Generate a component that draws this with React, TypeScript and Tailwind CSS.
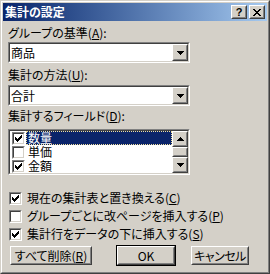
import React from "react";

const font = "font-['Noto_Sans_CJK_JP','Noto_Sans',sans-serif] [font-feature-settings:'palt']";

function Raised({ className = "", children }: { className?: string; children?: React.ReactNode }) {
  return (
    <div className={`border border-t-white border-l-white border-r-[#404040] border-b-[#404040] bg-[#d4d0c8] ${className}`}>
      <div className="w-full h-full border border-t-[#d4d0c8] border-l-[#d4d0c8] border-r-[#808080] border-b-[#808080] flex items-center justify-center whitespace-nowrap">
        {children}
      </div>
    </div>
  );
}

function Sunken({ className = "", children }: { className?: string; children?: React.ReactNode }) {
  return (
    <div className={`border border-t-[#808080] border-l-[#808080] border-r-white border-b-white ${className}`}>
      <div className="w-full h-full border border-t-[#404040] border-l-[#404040] border-r-[#d4d0c8] border-b-[#d4d0c8] bg-white flex overflow-hidden">
        {children}
      </div>
    </div>
  );
}

function Arrow({ up = false }: { up?: boolean }) {
  return (
    <svg width="7" height="4" viewBox="0 0 7 4" shapeRendering="crispEdges">
      <path d={up ? "M3 0h1v1h1v1h1v1h1v1H0V3h1V2h1V1h1z" : "M0 0h7v1H6v1H5v1H4v1H3V3H2V2H1V1H0z"} fill="#000" />
    </svg>
  );
}

function Check() {
  return (
    <svg width="7" height="7" viewBox="0 0 7 7" shapeRendering="crispEdges">
      <path d="M0 2h1v3H0zM1 3h1v3H1zM2 4h1v3H2zM3 3h1v3H3zM4 2h1v3H4zM5 1h1v3H5zM6 0h1v3H6z" fill="#000" />
    </svg>
  );
}

function CheckBox({ checked }: { checked: boolean }) {
  return (
    <Sunken className="w-[13px] h-[13px] shrink-0">
      <div className="w-full h-full flex items-center justify-center">{checked && <Check />}</div>
    </Sunken>
  );
}

function Combo({ value }: { value: string }) {
  return (
    <Sunken className="w-[182px] h-[21px]">
      <div className="flex-1 pl-[1px] flex items-center leading-none">{value}</div>
      <Raised className="w-[16px] h-full">
        <Arrow />
      </Raised>
    </Sunken>
  );
}

function Option({ checked, label, mark }: { checked: boolean; label: string; mark: string }) {
  return (
    <div className="h-[18px] flex items-center pl-[1px] gap-[5px] whitespace-nowrap">
      <CheckBox checked={checked} />
      <span>
        {label}(<u>{mark}</u>)
      </span>
    </div>
  );
}

const fields = [
  { name: "数量", checked: true, selected: true },
  { name: "単価", checked: false, selected: false },
  { name: "金額", checked: true, selected: false },
];

export default function App() {
  return (
    <div className={`w-[270px] h-[274px] bg-[#d4d0c8] text-black text-[12px] ${font}`}>
      <div className="w-full h-full border border-t-[#d4d0c8] border-l-[#d4d0c8] border-r-[#404040] border-b-[#404040]">
        <div className="w-full h-full border border-t-white border-l-white border-r-[#808080] border-b-[#808080] p-px flex flex-col">
          {/* title bar */}
          <div className="h-[18px] shrink-0 flex items-center pl-[2px] pr-[2px] bg-gradient-to-r from-[#0a246a] to-[#a6caf0]">
            <span className="text-white font-bold leading-none flex-1">集計の設定</span>
            <div className="flex gap-[2px]">
              <Raised className="w-[16px] h-[14px]">
                <span className="font-['Liberation_Sans',sans-serif] font-bold text-[11px] leading-none">?</span>
              </Raised>
              <Raised className="w-[16px] h-[14px]">
                <svg width="8" height="7" viewBox="0 0 8 7" shapeRendering="crispEdges">
                  <path d="M0 0h2v1h1v1h2V1h1V0h2v1H7v1H6v1H5v1h1v1h1v1h1v1H6V6H5V5H3v1H2v1H0V6h1V5h1V4h1V3H2V2H1V1H0z" fill="#000" />
                </svg>
              </Raised>
            </div>
          </div>

          {/* content */}
          <div className="flex flex-col pl-[5px] mt-px">
            <div className="mt-[4px] h-[14px] leading-[14px]">
              グループの基準(<u>A</u>):
            </div>
            <div className="mt-[2px]">
              <Combo value="商品" />
            </div>
            <div className="mt-[5px] h-[14px] leading-[14px]">
              集計の方法(<u>U</u>):
            </div>
            <div className="mt-[3px]">
              <Combo value="合計" />
            </div>
            <div className="mt-[3px] h-[14px] leading-[14px]">
              集計するフィールド(<u>D</u>):
            </div>

            {/* field list */}
            <Sunken className="mt-[6px] w-[182px] h-[46px]">
              <div className="flex-1 flex flex-col">
                {fields.map((f) => (
                  <div key={f.name} className="h-[14px] shrink-0 flex items-center pl-[2px]">
                    <CheckBox checked={f.checked} />
                    <div
                      className={`ml-px flex-1 h-full flex items-center pl-[2px] leading-none ${
                        f.selected ? "bg-[#0a246a] text-white outline-1 outline-dotted outline-offset-[-1px] outline-[#f0e0a0]" : ""
                      }`}
                    >
                      {f.name}
                    </div>
                  </div>
                ))}
              </div>
              <div className="w-[16px] flex flex-col bg-[#e8e6e2]">
                <Raised className="h-[16px] shrink-0">
                  <Arrow up />
                </Raised>
                <Raised className="flex-1" />
                <Raised className="h-[16px] shrink-0">
                  <Arrow />
                </Raised>
              </div>
            </Sunken>

            {/* options */}
            <div className="mt-[14px] flex flex-col">
              <Option checked label="現在の集計表と置き換える" mark="C" />
              <Option checked={false} label="グループごとに改ページを挿入する" mark="P" />
              <Option checked label="集計行をデータの下に挿入する" mark="S" />
            </div>

            {/* buttons */}
            <div className="mt-[2px] flex items-center pl-[2px]">
              <Raised className="w-[82px] h-[19px]">
                <span className="leading-none">
                  すべて削除(<u>R</u>)
                </span>
              </Raised>
              <div className="ml-[24px] border border-black">
                <Raised className="w-[58px] h-[19px]">
                  <span className="leading-none">OK</span>
                </Raised>
              </div>
              <Raised className="ml-[15px] w-[58px] h-[19px]">
                <span className="leading-none tracking-[-0.5px]">キャンセル</span>
              </Raised>
            </div>
          </div>
        </div>
      </div>
    </div>
  );
}
